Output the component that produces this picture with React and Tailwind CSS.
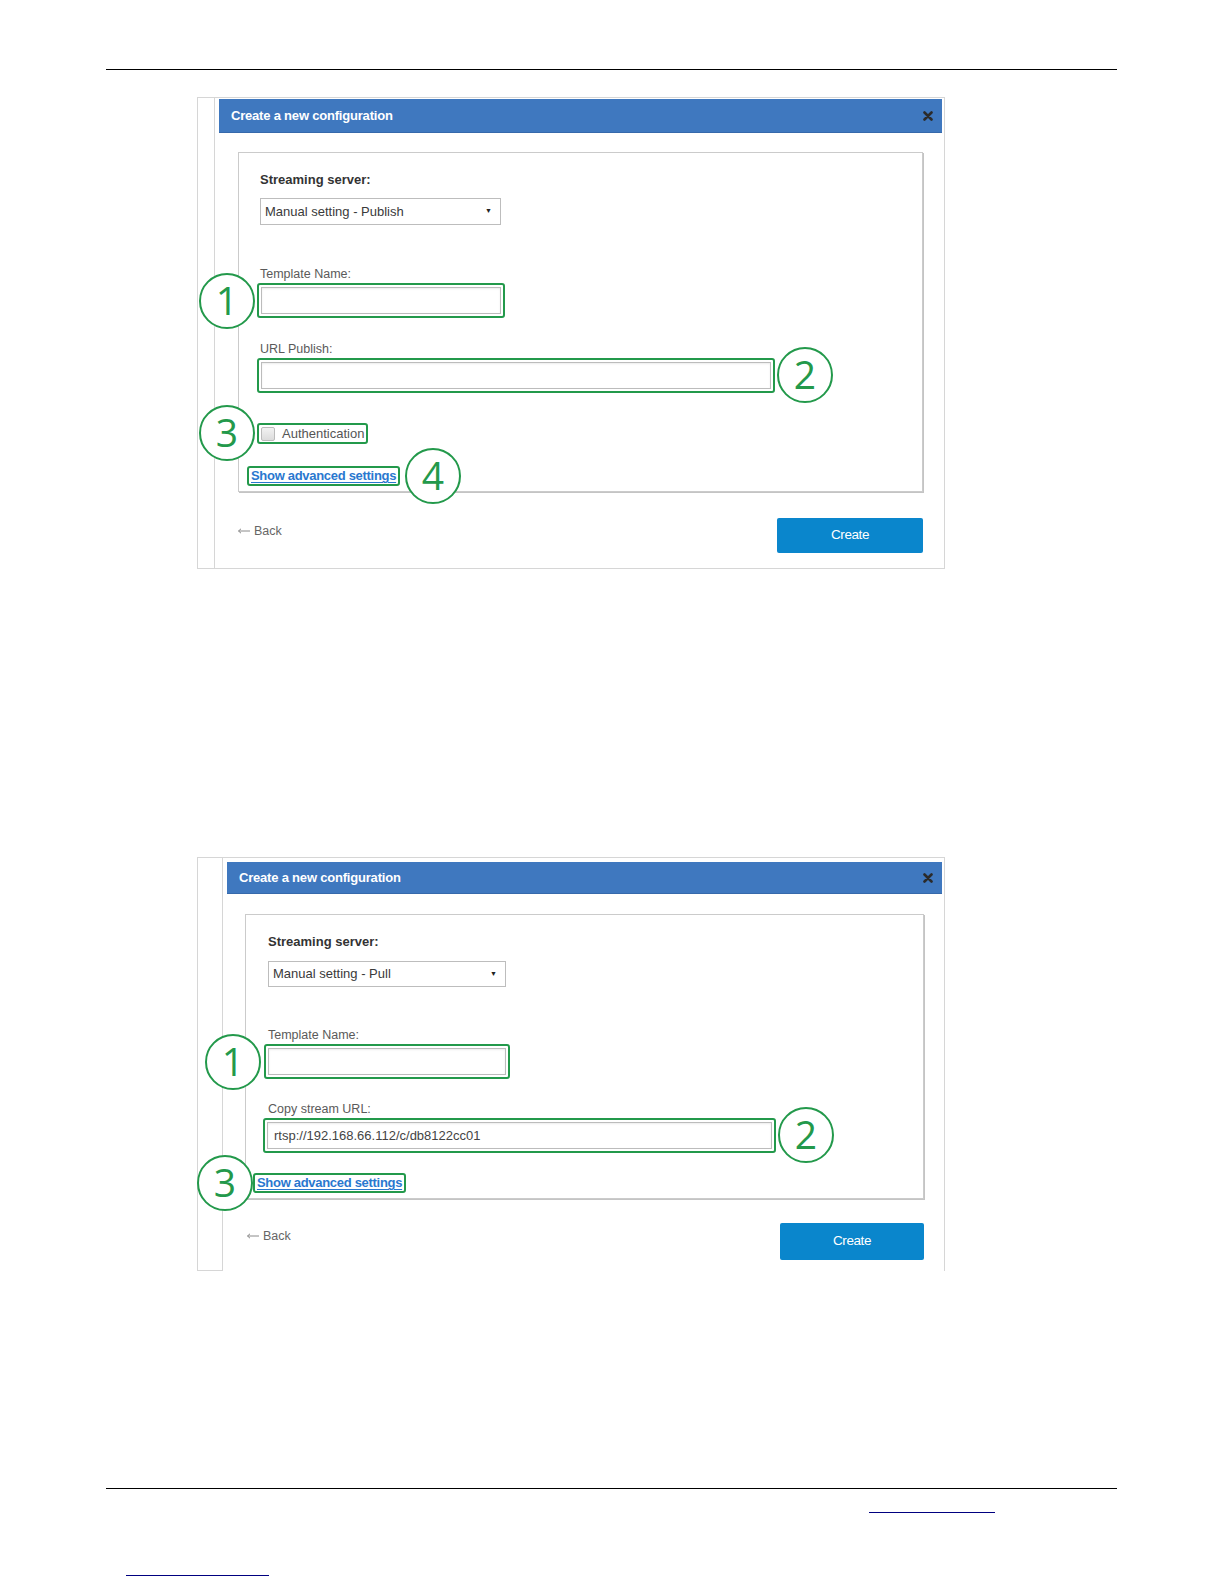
import React from 'react';

const GREEN = 'border-[#23994b]';

function Marker({ n, className }) {
  return (
    <div
      className={`absolute w-[56px] h-[56px] rounded-full border-2 ${GREEN} bg-white flex items-center justify-center text-[#23994b] text-[39px] font-medium leading-none font-['Open_Sans',sans-serif] ${className}`}
    >
      <span className="-mt-[3px]">{n}</span>
    </div>
  );
}

function Header({ height }) {
  return (
    <div className={`${height} bg-[#3f78bf] border-b border-[#3669ab] flex items-center justify-between pl-[12px] pr-[9px]`}>
      <span className="text-white text-[13px] font-bold tracking-[-0.2px]">Create a new configuration</span>
      <svg width="10" height="10" viewBox="0 0 10 10" className="text-[#2b2b2b]">
        <path d="M1.5 1.5 L8.5 8.5 M8.5 1.5 L1.5 8.5" stroke="currentColor" strokeWidth="2.6" strokeLinecap="round" />
      </svg>
    </div>
  );
}

function Select({ value, width, height }) {
  return (
    <div className={`${width} ${height} border border-[#bdbdbd] bg-white flex items-center justify-between pl-[4px] pr-[8px]`}>
      <span className="text-[13px] text-[#3a3a3a]">{value}</span>
      <span className="text-[7px] text-[#222]">▼</span>
    </div>
  );
}

function Field({ width, value, className = '' }) {
  return (
    <div className={`flex w-fit border-2 ${GREEN} rounded-[3px] p-[2px] ${className}`}>
      <div className={`${width} h-[27px] border border-[#bcbcbc] shadow-[inset_0_1px_2px_rgba(0,0,0,0.08)] bg-white flex items-center pl-[6px] text-[13px] text-[#444]`}>
        {value}
      </div>
    </div>
  );
}

function Label({ children, className = '' }) {
  return <div className={`text-[12.5px] leading-4 text-[#5a5a5a] ${className}`}>{children}</div>;
}

function AdvancedLink({ className = '' }) {
  return (
    <div className={`flex w-fit h-[20px] items-center border-2 ${GREEN} rounded-[3px] px-[2px] ${className}`}>
      <span className="text-[13px] font-bold text-[#2a78cf] underline underline-offset-2 tracking-[-0.3px]">Show advanced settings</span>
    </div>
  );
}

function Actions({ className, btn }) {
  return (
    <div className={`flex items-start justify-between ${className}`}>
      <div className="flex items-center gap-[4px] text-[12.5px] leading-4 text-[#666] mt-[5px]">
        <svg width="12" height="6" viewBox="0 0 12 6" className="text-[#8a8a8a]">
          <path d="M0.5 3 H12 M0.5 3 L3 0.8 M0.5 3 L3 5.2" stroke="currentColor" strokeWidth="1" fill="none" />
        </svg>
        <span>Back</span>
      </div>
      <div className={`${btn} bg-[#0a86cc] rounded-[2px] flex items-center justify-center text-white text-[13.5px] tracking-[-0.4px]`}>
        Create
      </div>
    </div>
  );
}

export default function App() {
  return (
    <div className="w-[1224px] h-[1584px] bg-white pt-[69px] font-['Liberation_Sans',Arial,sans-serif]">
      <div className="ml-[106px] w-[1011px] h-px bg-black" />

      {/* publish dialog */}
      <div className="relative ml-[197px] mt-[27px] w-[748px] h-[472px] border border-[#d6d6d6] flex">
        <div className="w-[17px] shrink-0 border-r border-[#d6d6d6]" />
        <div className="flex-1 pl-[4px] pr-[2px] pt-px">
          <Header height="h-[34px]" />
          <div className="mx-[19px] mt-[19px] h-[340px] border border-[#cbcbcb] shadow-[1px_1px_0_#c4c4c4] pl-[21px] pt-[19px]">
            <div className="text-[13px] leading-4 font-bold text-[#333]">Streaming server:</div>
            <div className="mt-[10px]">
              <Select value="Manual setting - Publish" width="w-[241px]" height="h-[27px]" />
            </div>
            <Label className="mt-[41px]">Template Name:</Label>
            <Field width="w-[240px]" className="mt-px -ml-[3px]" />
            <Label className="mt-[23px]">URL Publish:</Label>
            <Field width="w-[510px]" className="mt-px -ml-[3px]" />
            <div className={`flex w-fit mt-[30px] h-[21px] items-center gap-[7px] border-2 ${GREEN} rounded-[3px] pl-[2px] pr-[2px] -ml-[3px]`}>
              <span className="w-[14px] h-[14px] rounded-[2px] border border-[#bbb] bg-gradient-to-b from-[#f2f2f2] to-[#dcdcdc]" />
              <span className="text-[13px] text-[#555]">Authentication</span>
            </div>
            <AdvancedLink className="mt-[22px] -ml-[13px]" />
          </div>
          <Actions className="mx-[19px] mt-[26px]" btn="w-[146px] h-[35px]" />
        </div>
        <Marker n="1" className="left-[1px] top-[175px]" />
        <Marker n="2" className="left-[579px] top-[249px]" />
        <Marker n="3" className="left-[1px] top-[307px]" />
        <Marker n="4" className="left-[207px] top-[350px]" />
      </div>

      {/* pull dialog */}
      <div className="relative ml-[197px] mt-[288px] w-[748px] h-[414px] border-t border-l border-r border-[#d6d6d6] flex">
        <div className="w-[25px] shrink-0 border-r border-b border-[#d6d6d6]" />
        <div className="flex-1 pl-[4px] pr-[2px] pt-[4px]">
          <Header height="h-[32px]" />
          <div className="mx-[18px] mt-[20px] h-[285px] border border-[#cbcbcb] shadow-[1px_1px_0_#c4c4c4] pl-[22px] pt-[19px]">
            <div className="text-[13px] leading-4 font-bold text-[#333]">Streaming server:</div>
            <div className="mt-[11px]">
              <Select value="Manual setting - Pull" width="w-[238px]" height="h-[26px]" />
            </div>
            <Label className="mt-[40px]">Template Name:</Label>
            <Field width="w-[238px]" className="mt-px -ml-[4px]" />
            <Label className="mt-[22px]">Copy stream URL:</Label>
            <Field width="w-[505px]" value="rtsp://192.168.66.112/c/db8122cc01" className="mt-px -ml-[5px]" />
            <AdvancedLink className="mt-[20px] -ml-[15px]" />
          </div>
          <Actions className="ml-[20px] mr-[18px] mt-[24px]" btn="w-[144px] h-[37px]" />
        </div>
        <Marker n="1" className="left-[7px] top-[176px]" />
        <Marker n="2" className="left-[580px] top-[249px]" />
        <Marker n="3" className="-left-[1px] top-[297px]" />
      </div>

      <div className="ml-[106px] mt-[217px] w-[1011px] h-px bg-black" />
      <div className="ml-[869px] mt-[23px] w-[126px] h-px bg-[#000080]" />
      <div className="ml-[126px] mt-[62px] w-[143px] h-px bg-[#000080]" />
    </div>
  );
}
